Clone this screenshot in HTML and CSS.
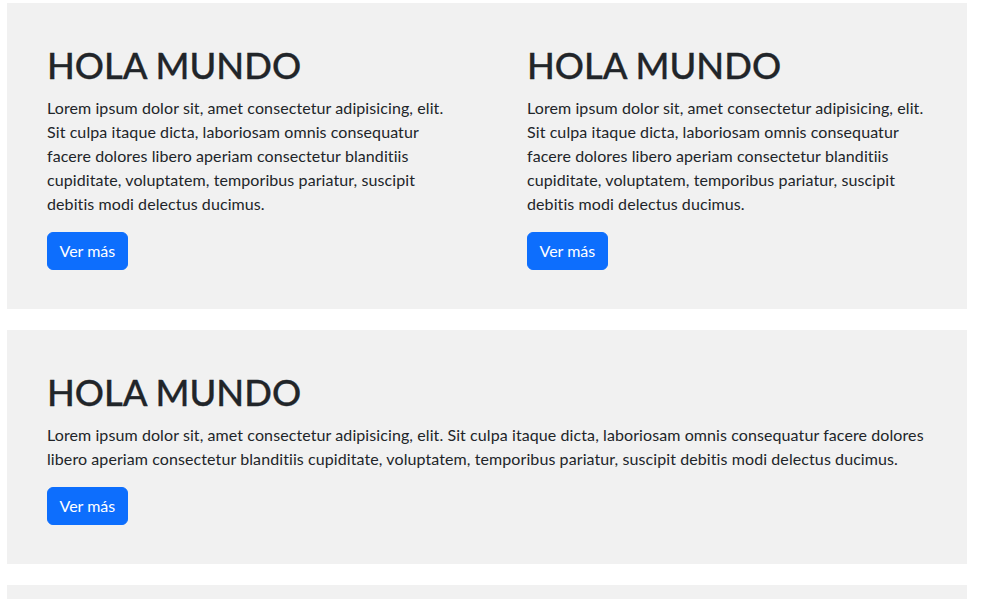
FILE: index.html
```html
<!DOCTYPE html>
<html lang="es">
<head>
<meta charset="utf-8">
<title>Hola Mundo</title>
<link rel="stylesheet" href="styles.css">
</head>
<body>
<main class="page">
  <section class="panel panel-split">
    <div class="col">
      <h1 class="title">HOLA MUNDO</h1>
      <p class="text">Lorem ipsum dolor sit, amet consectetur adipisicing, elit. Sit culpa itaque dicta, laboriosam omnis consequatur facere dolores libero aperiam consectetur blanditiis cupiditate, voluptatem, temporibus pariatur, suscipit debitis modi delectus ducimus.</p>
      <a class="btn" href="#">Ver más</a>
    </div>
    <div class="col">
      <h1 class="title">HOLA MUNDO</h1>
      <p class="text">Lorem ipsum dolor sit, amet consectetur adipisicing, elit. Sit culpa itaque dicta, laboriosam omnis consequatur facere dolores libero aperiam consectetur blanditiis cupiditate, voluptatem, temporibus pariatur, suscipit debitis modi delectus ducimus.</p>
      <a class="btn" href="#">Ver más</a>
    </div>
  </section>
  <section class="panel">
    <div class="col">
      <h1 class="title">HOLA MUNDO</h1>
      <p class="text">Lorem ipsum dolor sit, amet consectetur adipisicing, elit. Sit culpa itaque dicta, laboriosam omnis consequatur facere dolores libero aperiam consectetur blanditiis cupiditate, voluptatem, temporibus pariatur, suscipit debitis modi delectus ducimus.</p>
      <a class="btn" href="#">Ver más</a>
    </div>
  </section>
  <section class="panel">
    <div class="col">
      <h1 class="title">HOLA MUNDO</h1>
      <p class="text">Lorem ipsum dolor sit, amet consectetur adipisicing, elit. Sit culpa itaque dicta, laboriosam omnis consequatur facere dolores libero aperiam consectetur blanditiis cupiditate, voluptatem, temporibus pariatur, suscipit debitis modi delectus ducimus.</p>
      <a class="btn" href="#">Ver más</a>
    </div>
  </section>
</main>
</body>
</html>
```
FILE: styles.css
```css
* { box-sizing: border-box; }

html, body {
  margin: 0;
  background: #ffffff;
}

body {
  font-family: Lato, "Open Sans", sans-serif;
  font-size: 16px;
  line-height: 24px;
  color: #212529;
  font-variant-ligatures: none;
  overflow: hidden;
}

.page {
  width: 960px;
  margin: 3px 0 0 7px;
  display: flex;
  flex-direction: column;
  gap: 21px;
}

.panel {
  background: #f1f1f1;
  display: grid;
  grid-template-columns: 1fr;
}

.panel-split {
  grid-template-columns: 1fr 1fr;
}

.col {
  padding: 40px 40px 39px;
}

.title {
  margin: 0 0 9px;
  font-size: 36.4px;
  line-height: 44px;
  font-weight: 500;
  color: #212529;
  -webkit-text-stroke: 0.35px #212529;
}

.text {
  margin: 0 0 16px;
  letter-spacing: 0.09px;
}

.btn {
  display: inline-block;
  padding: 6px 12px 6px 11.5px;
  border: 1px solid #0d6efd;
  border-radius: 6px;
  background: #0d6efd;
  color: #ffffff;
  font-size: 16px;
  line-height: 24px;
  text-decoration: none;
}
```
